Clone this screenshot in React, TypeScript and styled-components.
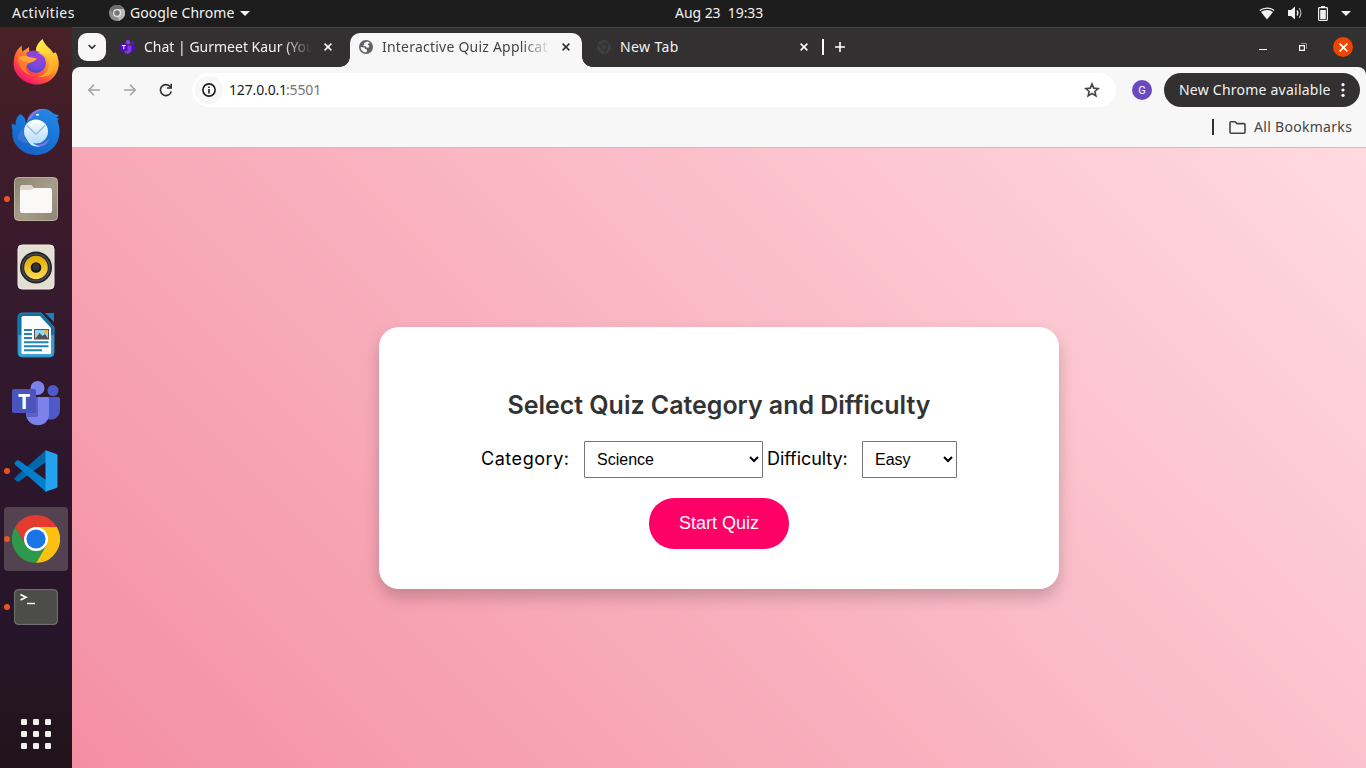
import React from "react";
import styled, { createGlobalStyle, css } from "styled-components";

const ui = `"Noto Sans", "Open Sans", sans-serif`;

const GlobalStyle = createGlobalStyle`
  * { box-sizing: border-box; }
  body { margin: 0; overflow: hidden; font-family: ${ui}; }
  svg { display: block; flex: none; }
`;

const Desktop = styled.div`
  width: 1366px;
  height: 768px;
  display: flex;
  flex-direction: column;
  overflow: hidden;
`;

const Text = styled.span<{ $w: number; $size?: number; $ls?: number; $color?: string; $fade?: boolean }>`
  display: block;
  flex: none;
  width: ${(p) => p.$w}px;
  font-size: ${(p) => p.$size ?? 14}px;
  line-height: 20px;
  letter-spacing: ${(p) => p.$ls ?? 0}px;
  color: ${(p) => p.$color ?? "#f2f2f2"};
  white-space: pre;
  ${(p) =>
    p.$fade &&
    css`
      mask-image: linear-gradient(to right, #000 calc(100% - 28px), transparent);
    `}
`;

/* ---------- top panel ---------- */
const TopPanel = styled.header`
  height: 27px;
  flex: none;
  display: grid;
  grid-template-columns: 663px 88px 1fr;
  align-items: center;
  background: #1d1d1d;
  padding: 0 15px 1px 12px;
`;
const PanelLeft = styled.div`
  display: flex;
  align-items: center;
`;
const AppMenu = styled.div`
  display: flex;
  align-items: center;
  gap: 5px;
  margin-left: 34px;
`;
const PanelRight = styled.div`
  display: flex;
  justify-content: flex-end;
  align-items: center;
`;
const Gap = styled.span<{ $w: number }>`
  flex: none;
  width: ${(p) => p.$w}px;
`;

/* ---------- dock ---------- */
const Body = styled.div`
  flex: 1;
  display: flex;
  min-height: 0;
`;
const Dock = styled.nav`
  width: 72px;
  flex: none;
  display: flex;
  flex-direction: column;
  gap: 4px;
  padding: 4px 4px 2px;
  background: linear-gradient(180deg, #4a2126 0%, #3d1b2a 18%, #351a2e 38%, #2c162b 62%, #26152a 82%, #211419 100%);
`;
const DockItem = styled.div<{ $active?: boolean; $running?: boolean; $last?: boolean }>`
  position: relative;
  width: 64px;
  height: 64px;
  flex: none;
  display: flex;
  align-items: center;
  justify-content: center;
  border-radius: 4px;
  background: ${(p) => (p.$active ? "#534351" : "transparent")};
  ${(p) => p.$last && "margin-top: auto;"}
  &::before {
    content: "";
    display: ${(p) => (p.$running ? "block" : "none")};
    position: absolute;
    left: 0;
    top: 29px;
    width: 6px;
    height: 6px;
    border-radius: 50%;
    background: #e95420;
  }
`;

/* ---------- browser ---------- */
const Browser = styled.main`
  flex: 1;
  min-width: 0;
  display: flex;
  flex-direction: column;
  background: #323031;
  border-top: 1px solid #464445;
`;
const TabStrip = styled.div`
  height: 39px;
  flex: none;
  display: flex;
  align-items: center;
  padding: 0 13px 1px 6px;
`;
const TabSearch = styled.div`
  width: 28px;
  height: 28px;
  border-radius: 9px;
  background: #f7f7f7;
  display: flex;
  align-items: center;
  justify-content: center;
  flex: none;
`;
const Tab = styled.div<{ $active?: boolean; $w: number }>`
  position: relative;
  flex: none;
  width: ${(p) => p.$w}px;
  height: 28px;
  display: flex;
  align-items: center;
  ${(p) =>
    p.$active &&
    css`
      height: 34px;
      align-self: flex-end;
      margin-bottom: -1px;
      padding-bottom: 6px;
      background: #f7f7f7;
      border-radius: 10px 10px 0 0;
      &::before,
      &::after {
        content: "";
        position: absolute;
        bottom: 0;
        width: 10px;
        height: 10px;
      }
      &::before {
        left: -10px;
        background: radial-gradient(circle at 0 0, transparent 9.5px, #f7f7f7 10px);
      }
      &::after {
        right: -10px;
        background: radial-gradient(circle at 100% 0, transparent 9.5px, #f7f7f7 10px);
      }
    `}
`;
const Divider = styled.span<{ $color: string }>`
  width: 2px;
  height: 16px;
  flex: none;
  background: ${(p) => p.$color};
`;
const WindowButtons = styled.div`
  margin-left: auto;
  display: flex;
  align-items: center;
`;
const CloseButton = styled.div`
  width: 20px;
  height: 20px;
  border-radius: 50%;
  background: #ee4500;
  display: flex;
  align-items: center;
  justify-content: center;
`;
const Toolbar = styled.div`
  height: 40px;
  flex: none;
  display: flex;
  align-items: center;
  background: #f7f7f7;
  border-radius: 8px 8px 0 0;
  padding: 6px 6px 0 14px;
`;
const AddressBar = styled.div`
  width: 924px;
  height: 34px;
  flex: none;
  border-radius: 17px;
  background: #fff;
  display: flex;
  align-items: center;
  padding: 0 16px 0 3px;
`;
const SiteInfo = styled.div`
  width: 28px;
  height: 28px;
  border-radius: 50%;
  background: #f7f7f7;
  display: flex;
  align-items: center;
  justify-content: center;
  margin-right: 6px;
`;
const Spacer = styled.span`
  flex: 1;
`;
const Avatar = styled.div`
  width: 20px;
  height: 20px;
  border-radius: 50%;
  background: #6b48c0;
  color: #fff;
  font: 400 11px/21px Roboto, sans-serif;
  text-align: center;
  margin: 0 12px 0 16px;
`;
const UpdatePill = styled.div`
  width: 196px;
  height: 34px;
  border-radius: 17px;
  background: #323031;
  display: flex;
  align-items: center;
  padding-left: 15px;
`;
const Bookmarks = styled.div`
  height: 41px;
  flex: none;
  display: flex;
  justify-content: flex-end;
  align-items: center;
  padding-right: 14px;
  background: #f7f7f7;
  border-bottom: 1px solid #c2c0c1;
`;

/* ---------- quiz page ---------- */
const Page = styled.section`
  flex: 1;
  display: flex;
  align-items: center;
  justify-content: center;
  background: linear-gradient(45deg, #f48fa3, #ffdae0);
`;
const Card = styled.div`
  width: 680px;
  height: 262px;
  border-radius: 20px;
  background: #fff;
  box-shadow: 0 8px 16px rgba(0, 0, 0, 0.2);
  padding: 60px 40px 40px;
  display: flex;
  flex-direction: column;
  align-items: center;
`;
const Heading = styled.h2`
  margin: 0;
  height: 36px;
  font: 600 25px/36px Inter, sans-serif;
  letter-spacing: -0.03px;
  color: #333;
  white-space: nowrap;
`;
const Fields = styled.div`
  display: flex;
  align-items: center;
  width: 476px;
  margin-top: 18px;
`;
const FieldLabel = styled.label<{ $w: number; $ls: number }>`
  flex: none;
  width: ${(p) => p.$w}px;
  padding-bottom: 2px;
  font: 400 18px/27px Inter, sans-serif;
  letter-spacing: ${(p) => p.$ls}px;
  white-space: nowrap;
  color: #000;
`;
const Select = styled.select<{ $w: number }>`
  flex: none;
  width: ${(p) => p.$w}px;
  height: 37px;
  padding: 8px;
  margin: 0 4px 0 0;
  font: 16px "Liberation Sans", Arial, sans-serif;
  color: #000;
  background: #fff;
  border: 1px solid #767676;
  border-radius: 1px;
`;
const StartButton = styled.button`
  width: 140px;
  height: 51px;
  margin-top: 20px;
  padding: 0;
  border: 0;
  border-radius: 25px;
  background: #ff0066;
  color: #fff;
  font: 18px "Liberation Sans", Arial, sans-serif;
`;

/* ---------- icons ---------- */
const Caret = () => (
  <svg width="10" height="5" viewBox="0 0 10 5"><path d="M0 0h10L5 5z" fill="#f2f2f2" /></svg>
);
const Cross = ({ color, s = 8 }: { color: string; s?: number }) => (
  <svg width={s} height={s} viewBox="0 0 8 8"><path d="M.6.6l6.8 6.8M7.4.6L.6 7.4" stroke={color} strokeWidth="1.5" /></svg>
);
const MonoChrome = () => (
  <svg width="16" height="16" viewBox="0 0 16 16">
    <circle cx="8" cy="8" r="8" fill="#8d8d8d" />
    <path d="M8 0a8 8 0 0 1 7 12L10 16 8 8z" fill="#b9b9b9" />
    <path d="M1 4a8 8 0 0 1 14 0H8L4.5 10z" fill="#6f6f6f" />
    <circle cx="8" cy="8" r="4" fill="#e8e8e8" />
    <circle cx="8" cy="8" r="2.8" fill="#777" />
  </svg>
);
const Wifi = () => (
  <svg width="16" height="13" viewBox="0 0 16 13">
    <path d="M.8 3.6C5 .2 11 .2 15.2 3.6" stroke="#f2f2f2" strokeWidth="1.3" fill="none" />
    <path d="M2 5c3.6-2.8 8.4-2.8 12 0L8 12.5z" fill="#f2f2f2" />
  </svg>
);
const Speaker = () => (
  <svg width="16" height="14" viewBox="0 0 16 14">
    <path d="M1 4h3L8 .5v13L4 10H1z" fill="#f2f2f2" />
    <path d="M10 4.500q1.800 2.500 0 5" stroke="#f2f2f2" strokeWidth="1.300" fill="none" />
    <path d="M12.200 2.200q3.400 4.800 0 9.600" stroke="#b5b5b5" strokeWidth="1.200" fill="none" />
  </svg>
);
const Battery = () => (
  <svg width="10" height="15" viewBox="0 0 10 15">
    <path d="M3 0h4v1.500H3z" fill="#f2f2f2" />
    <rect x=".6" y="1.600" width="8.800" height="12.800" rx=".8" fill="none" stroke="#f2f2f2" strokeWidth="1.200" />
    <path d="M2.200 4h5.600v9H2.200z" fill="#f2f2f2" />
  </svg>
);
const MiniTeams = () => (
  <svg width="16" height="14" viewBox="0 0 16 14">
    <circle cx="8" cy="2.400" r="2.300" fill="#8c3fe8" />
    <circle cx="12.500" cy="3.200" r="1.700" fill="#5c17c5" />
    <path d="M10.500 5.500h4.500V9a3.200 3.200 0 0 1-4.500 2.800z" fill="#4a10b4" />
    <path d="M4.500 5.500h7v4.300a4 4 0 0 1-7 2.600z" fill="#7c3be6" />
    <rect x="0" y="3.500" width="7.500" height="7.500" rx=".8" fill="#4f12b8" />
    <path d="M1.900 5.500h3.800M3.800 5.500v3.800" stroke="#fff" strokeWidth="1" />
  </svg>
);
const Globe = () => (
  <svg width="14" height="14" viewBox="0 0 14 14">
    <circle cx="7" cy="7" r="7" fill="#5c6268" />
    <path d="M7.400 1.700L5 3.300l.3 1.300L3.800 6l2.900.2 1.100 1.600 1.900-.3.800-1.400-1.600-1 .7-1.800 1.800-.1C10.500 2.100 9 1.500 7.400 1.700zM1.500 6.900l4 .5.600 1.700 1.900.5-.1 1.900-1.100 1A5.600 5.600 0 0 1 1.500 6.900z" fill="#f7f7f7" />
  </svg>
);
const DarkChrome = () => (
  <svg width="14" height="14" viewBox="0 0 14 14" fill="none" stroke="#3d4144">
    <circle cx="7" cy="7" r="5.400" strokeWidth="3.200" />
    <circle cx="7" cy="7" r="2.400" fill="#3d4144" stroke="none" />
    <path d="M7 3.800h6M4.200 8.600L1.300 3.600M9.800 8.600L7 13.500" stroke="#323031" strokeWidth=".8" />
  </svg>
);
const Arrow = ({ flip }: { flip?: boolean }) => (
  <svg width="14" height="14" viewBox="0 0 14 14">
    <path d="M13 7H2M7 1.800L1.800 7 7 12.200" transform={flip ? "matrix(-1 0 0 1 14 0)" : undefined} fill="none" stroke="#a3a2a3" strokeWidth="1.600" />
  </svg>
);
const Reload = () => (
  <svg width="14" height="14" viewBox="0 0 14 14">
    <path d="M12.300 8.400a5.500 5.500 0 1 1-1-4.700L12.500 5" fill="none" stroke="#333132" strokeWidth="1.600" />
    <path d="M13 .8v5H8V4.200h3.400V.8z" fill="#333132" />
  </svg>
);
const Info = () => (
  <svg width="14" height="14" viewBox="0 0 14 14">
    <circle cx="7" cy="7" r="6.100" fill="none" stroke="#1c1b1c" strokeWidth="1.600" />
    <path d="M6.200 3.400h1.600V5H6.200zM6.200 6h1.600v4.600H6.200z" fill="#1c1b1c" />
  </svg>
);
const Star = () => (
  <svg width="16" height="16" viewBox="0 0 16 16">
    <path d="M8 2l1.750 4.150 4.500.4-3.400 2.950 1 4.400L8 11.550 4.150 13.900l1-4.400L1.750 6.550l4.500-.4z" fill="none" stroke="#464445" strokeWidth="1.600" />
  </svg>
);
const Folder = () => (
  <svg width="17" height="13" viewBox="0 0 17 13">
    <path d="M1 1.800Q1 .8 2 .8h4.200l1.800 1.800h7q1 0 1 1v7.600q0 1-1 1H2q-1 0-1-1z" fill="none" stroke="#464445" strokeWidth="1.600" />
  </svg>
);
const Dots = () => (
  <svg width="4" height="14" viewBox="0 0 4 14" fill="#fff"><circle cx="2" cy="1.700" r="1.600" /><circle cx="2" cy="7" r="1.600" /><circle cx="2" cy="12.300" r="1.600" /></svg>
);
const Restore = () => (
  <svg width="8" height="8" viewBox="0 0 8 8" fill="none"><path d="M2 .5h5.500V6" stroke="#929192" /><path d="M.6 2.600h4.800v4.800H.6z" stroke="#fff" strokeWidth="1.200" /></svg>
);

const Firefox = () => (
  <svg width="48" height="48" viewBox="0 1.500 48 48">
    <defs>
      <linearGradient id="ff1" x1=".85" y1=".1" x2=".25" y2=".95">
        <stop offset="0" stopColor="#fff44f" /><stop offset=".35" stopColor="#ffa62a" /><stop offset=".65" stopColor="#ff5a36" /><stop offset="1" stopColor="#f5126f" />
      </linearGradient>
      <radialGradient id="ff2" cx=".6" cy=".3" r=".8"><stop offset="0" stopColor="#a43fe0" /><stop offset=".6" stopColor="#6b4be0" /><stop offset="1" stopColor="#4f3da8" /></radialGradient>
      <linearGradient id="ff3" x1=".3" y1="0" x2=".7" y2="1"><stop offset="0" stopColor="#fff04a" /><stop offset="1" stopColor="#ff9a22" /></linearGradient>
    </defs>
    <path d="M10 8c-.5 2.500-.2 4.500.5 6L17 9.500l.2 5.500L24 14l6-12c1 4 4 7 8 10l3 4 2.500-1C46 20 47 24 46.500 29 45 40 35.500 47 24.500 47S2 38 1.600 27C1.500 19 4 12 10 8z" fill="url(#ff1)" />
    <path d="M30.500 1.500C25 6 23 11 24.500 14.500 33 16 38 21 37 28c-.8 6-5 10-11 11.500 10 1 20-5 20.500-14 0-4-1-8-3-11l-.7 4C40 11 33 9 30.500 1.500z" fill="url(#ff3)" />
    <circle cx="24" cy="25.500" r="10" fill="url(#ff2)" />
    <path d="M14 15.500q8-4.500 14-.5-5 0-4 4l-8 2z" fill="#8a45d8" />
    <path d="M5 18c3 .5 7-1.500 12 1.500 2 1.200 6 .5 7.500 1.500-1 3-5 3.500-7 4.500-2 1-3 2.500-3.500 4.500 0 6 5 8.500 10 8.500C14 39 6 31 5 18z" fill="#ff7a2a" />
    <path d="M7 19.500c3-1 7-1.500 10 0 2 1.200 6 .5 7.500 1.500-1 3-5 3.500-8 4.200C12.500 24.500 9 23.500 7 19.500z" fill="#ffa436" />
  </svg>
);
const Thunderbird = () => (
  <svg width="50" height="48" viewBox="0 -1 50 48">
    <defs>
      <linearGradient id="tb1" x1=".7" y1="0" x2=".2" y2="1"><stop offset="0" stopColor="#2386e6" /><stop offset=".6" stopColor="#1670d2" /><stop offset="1" stopColor="#1a5fc4" /></linearGradient>
      <linearGradient id="tb2" x1="0" y1="0" x2="0" y2="1"><stop offset="0" stopColor="#fff" /><stop offset="1" stopColor="#b3dcfb" /></linearGradient>
    </defs>
    <path d="M9.500 6C6 8.500 4.500 12 4.500 17L1.500 15.500C.5 17 .5 19 1.500 22-.5 36 11.500 47 24.500 47c14 0 24-10 24-23.500 0-4-.5-7-2-10.500l1.500-2.500-3-.5 3-2.500-5.500-2C37.500 0 29.500-.5 23.500 3c-4 2.500-6 5-7.500 9.500L14.500 16c1-4-1-7.500-5-10z" fill="url(#tb1)" />
    <path d="M16.500 13C18 6 25 0 35 1.200 29 1.800 24.500 4 21.500 9z" fill="#8b74e0" />
    <path d="M7 31c0-6 3-8 6-12-1 8 1 13 5 16-5 0-8-1-11-4z" fill="#3975d8" />
    <path d="M26 37c6-1 9-3 12-6.500-1 5-4.500 8-10 8z" fill="#7d78df" />
    <circle cx="25" cy="23.500" r="12" fill="url(#tb2)" />
    <path d="M18 31c3 4 7 6.500 11 7.500-6 1-12-2-13.500-9z" fill="#cbe7fc" />
    <path d="M16 17.500l8 8q1 1 2 0l8-8" fill="none" stroke="#8dbcda" strokeWidth="1.300" />
    <ellipse cx="26.500" cy="6.800" rx="1.800" ry="1" fill="#d8f0ff" />
  </svg>
);
const Files = () => (
  <svg width="46" height="46" viewBox="0 0 46 46">
    <defs><linearGradient id="fi" x1="0" y1="0" x2="1" y2="1"><stop offset="0" stopColor="#8b8471" /><stop offset=".5" stopColor="#a59d89" /><stop offset="1" stopColor="#8f8775" /></linearGradient></defs>
    <rect x="1.500" y="1.500" width="43" height="43" rx="4" fill="url(#fi)" stroke="#b9b19c" />
    <path d="M7 11q0-2 2-2h9.500l3 3.500H37v6H7z" fill="#d9d6cc" />
    <path d="M7 14h11l3.500-2H37q2 0 2 2v21q0 2-2 2H9q-2 0-2-2z" fill="#faf9f8" />
  </svg>
);
const Rhythmbox = () => (
  <svg width="38" height="46" viewBox="0 0 38 46">
    <defs><linearGradient id="rb" x1="0" y1="0" x2="0" y2="1"><stop offset="0" stopColor="#dea900" /><stop offset="1" stopColor="#ffdb55" /></linearGradient></defs>
    <rect x="1" y="1" width="36" height="44" rx="4" fill="#e3dfd4" stroke="#f0ede4" />
    <circle cx="19" cy="23.500" r="16" fill="#25252c" /><circle cx="19" cy="23.500" r="14" fill="#55565b" /><circle cx="19" cy="23.500" r="13" fill="#26272a" />
    <circle cx="19" cy="23.500" r="11.800" fill="url(#rb)" /><circle cx="19" cy="23.500" r="5.300" fill="#17181a" /><circle cx="19" cy="23" r="3.500" fill="#313335" />
  </svg>
);
const Writer = () => (
  <svg width="38" height="46" viewBox="0 0 38 46">
    <defs><linearGradient id="wr" x1="0" y1="0" x2="0" y2="1"><stop offset=".48" stopColor="#0c6fa6" /><stop offset=".52" stopColor="#3da0cf" /></linearGradient></defs>
    <path d="M5 1h19l13 14v26q0 4-4 4H5q-4 0-4-4V5q0-4 4-4z" fill="url(#wr)" stroke="#248bbd" />
    <path d="M6 4h17l11 12v25q0 1-1 1H6q-1.500 0-1.500-1V5.500Q4.500 4 6 4z" fill="#fff" />
    <path d="M28 1h9v9z" fill="#1582b8" />
    <path d="M7 18h8M7 22h8M7 26h8M7 30.200h24.500M7 34.300h24.500M7 38.300h18" stroke="#1c84bd" strokeWidth="2" />
    <rect x="17.500" y="17.500" width="14" height="9.500" fill="#90d3f4" stroke="#565656" /><path d="M18 27l4.500-6 3 3 2.500-2 3.500 5z" fill="#515151" /><circle cx="28.800" cy="19.500" r="1.700" fill="#f3b725" />
  </svg>
);
const TeamsLetter = styled.span`
  position: absolute;
  left: 8px;
  top: 18px;
  width: 24px;
  height: 24px;
  background: #4b53bc;
  border-radius: 2px;
  color: #fff;
  font: 700 21px/25px "Open Sans", sans-serif;
  text-align: center;
`;
const Teams = () => (
  <>
    <svg width="48" height="46" viewBox="0 0 48 46">
      <circle cx="25.500" cy="8" r="7" fill="#7b83eb" /><circle cx="41" cy="10.500" r="5.500" fill="#5059c9" />
      <path d="M32 17h14q2 0 2 2v11c0 8-8 12-14 8z" fill="#5059c9" />
      <path d="M14 17h21q2 0 2 2v15c0 15-22 15-23 0z" fill="#7b83eb" />
      <path d="M14 17h12v18q0 2-2 2h-9.500z" fill="#5a60c8" />
    </svg>
    <TeamsLetter>T</TeamsLetter>
  </>
);
const VsCode = () => (
  <svg width="44" height="44" viewBox="0 0 44 44">
    <path d="M1 28.500L32 1v12L5 32.500q-1 .6-2 0l-2-1.800q-1-1 0-2.200z" fill="#0069ae" />
    <path d="M1 15.500L32 43V31L5 11.500q-1-.6-2 0L1 13.300q-1 1 0 2.200z" fill="#007fcc" />
    <path d="M31.500 1.200v41.600L42.500 39q1-.5 1-1.500v-31q0-1-1-1.500z" fill="#24a2ee" />
  </svg>
);
const Chrome = () => (
  <svg width="48" height="48" viewBox="0 0 48 48">
    <path d="M13.600 30L3.200 12a24 24 0 0 1 41.600 0H24z" fill="#e33b2e" />
    <path d="M24 12h20.800A24 24 0 0 1 24 48L34.400 30z" fill="#fcc010" />
    <path d="M24 48A24 24 0 0 1 3.200 12l10.400 18L34.400 30z" fill="#2c9a4a" />
    <circle cx="24" cy="24" r="12" fill="#fff" /><circle cx="24" cy="24" r="9.600" fill="#1b73e8" />
  </svg>
);
const Terminal = () => (
  <svg width="44" height="38" viewBox="0 0 44 38">
    <rect x=".6" y="1.600" width="42.800" height="34.800" rx="3.500" fill="#4c4c4b" stroke="#777775" />
    <path d="M6.500 6.500l5.500 2.700-5.500 2.700" fill="none" stroke="#fff" strokeWidth="1.700" /><path d="M13 15.500h8" stroke="#fff" strokeWidth="1.400" />
  </svg>
);
const AppGrid = () => (
  <svg width="30" height="30" viewBox="0 0 30 30" fill="#f2f0ee">
    {[0, 12, 24].map((y) => [0, 12, 24].map((x) => <rect key={`${x}-${y}`} x={x} y={y} width="6" height="6" rx="1.300" />))}
  </svg>
);

export default function App() {
  return (
    <Desktop>
      <GlobalStyle />
      <TopPanel>
        <PanelLeft>
          <Text $w={63} $ls={0.45}>Activities</Text>
          <AppMenu>
            <MonoChrome />
            <Text $w={105} $ls={0.08}>Google Chrome</Text>
            <Caret />
          </AppMenu>
        </PanelLeft>
        <Text $w={88} $ls={-0.05}>{"Aug 23  19:33"}</Text>
        <PanelRight>
          <Wifi /><Gap $w={12} /><Speaker /><Gap $w={15} /><Battery /><Gap $w={13} /><Caret />
        </PanelRight>
      </TopPanel>
      <Body>
        <Dock>
          <DockItem><Firefox /></DockItem>
          <DockItem><Thunderbird /></DockItem>
          <DockItem $running><Files /></DockItem>
          <DockItem><Rhythmbox /></DockItem>
          <DockItem><Writer /></DockItem>
          <DockItem><Teams /></DockItem>
          <DockItem $running><VsCode /></DockItem>
          <DockItem $running $active><Chrome /></DockItem>
          <DockItem $running><Terminal /></DockItem>
          <DockItem $last><AppGrid /></DockItem>
        </Dock>
        <Browser>
          <TabStrip>
            <TabSearch>
              <svg width="8" height="6" viewBox="0 0 8 6"><path d="M.6 1L4 4.400 7.400 1" fill="none" stroke="#323031" strokeWidth="1.600" /></svg>
            </TabSearch>
            <Tab $w={244}>
              <Gap $w={14} /><MiniTeams /><Gap $w={8} />
              <Text $w={168} $fade>Chat | Gurmeet Kaur (You</Text>
              <Gap $w={12} /><Cross color="#fff" />
            </Tab>
            <Tab $w={232} $active>
              <Gap $w={9} /><Globe /><Gap $w={9} />
              <Text $w={168} $fade $ls={0.22} $color="#464445">Interactive Quiz Applicat</Text>
              <Gap $w={12} /><Cross color="#323031" />
            </Tab>
            <Tab $w={240}>
              <Gap $w={15} /><DarkChrome /><Gap $w={9} />
              <Text $w={168} $ls={0.4}>New Tab</Text>
              <Gap $w={12} /><Cross color="#fff" />
            </Tab>
            <Divider $color="#fff" />
            <Gap $w={11} />
            <svg width="10" height="10" viewBox="0 0 10 10"><path d="M5 0v10M0 5h10" stroke="#fff" strokeWidth="1.600" /></svg>
            <WindowButtons>
              <svg width="8" height="8" viewBox="0 0 8 8"><path d="M0 6.500h8" stroke="#fff" /></svg>
              <Gap $w={32} /><Restore /><Gap $w={26} />
              <CloseButton><Cross color="#fff" s={9} /></CloseButton>
            </WindowButtons>
          </TabStrip>
          <Toolbar>
            <Gap $w={1} /><Arrow /><Gap $w={22} /><Arrow flip /><Gap $w={22} /><Reload /><Gap $w={19} />
            <AddressBar>
              <SiteInfo><Info /></SiteInfo>
              <Text $w={57} $ls={-0.15} $color="#1c1b1c">127.0.0.1</Text>
              <Text $w={40} $ls={-0.15} $color="#757475">:5501</Text>
              <Spacer />
              <Star />
            </AddressBar>
            <Avatar>G</Avatar>
            <UpdatePill>
              <Text $w={152} $ls={0.23}>New Chrome available</Text>
              <Gap $w={10} /><Dots />
            </UpdatePill>
          </Toolbar>
          <Bookmarks>
            <Divider $color="#323031" />
            <Gap $w={15} /><Folder /><Gap $w={8} />
            <Text $w={98} $ls={0.3} $color="#464445">All Bookmarks</Text>
          </Bookmarks>
          <Page>
            <Card>
              <Heading>Select Quiz Category and Difficulty</Heading>
              <Fields>
                <FieldLabel $w={103} $ls={0.55}>Category:</FieldLabel>
                <Select $w={179}><option>Science</option></Select>
                <FieldLabel $w={95} $ls={-0.08}>Difficulty:</FieldLabel>
                <Select $w={95}><option>Easy</option></Select>
              </Fields>
              <StartButton>Start Quiz</StartButton>
            </Card>
          </Page>
        </Browser>
      </Body>
    </Desktop>
  );
}
